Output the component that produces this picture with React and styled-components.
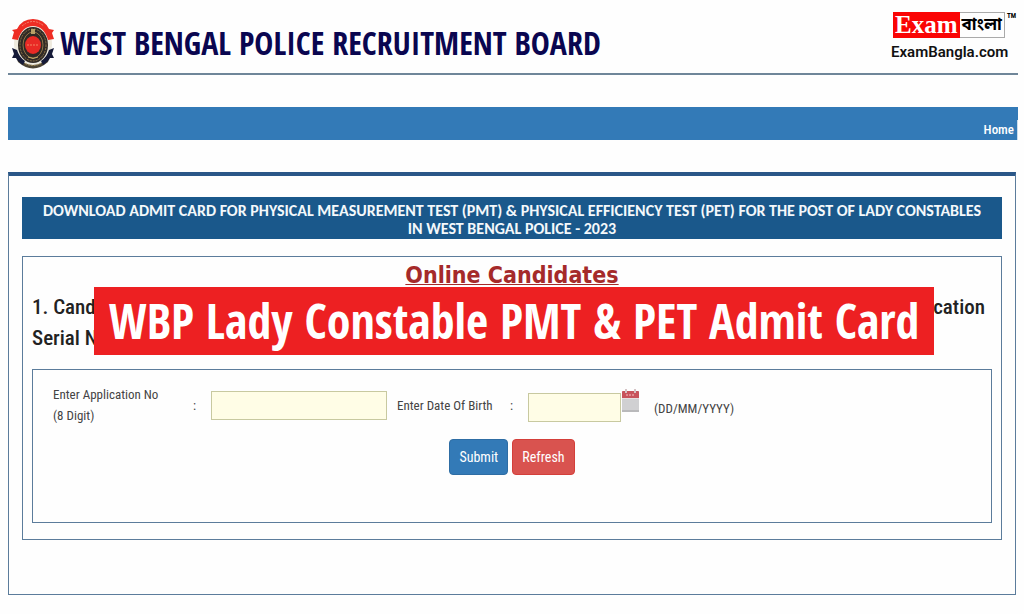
import React from "react";
import styled, { createGlobalStyle } from "styled-components";

const condensedBold = `"Open Sans Condensed", "Open Sans", sans-serif`;
const condensed = `"Roboto Condensed", Roboto, sans-serif`;
const line = "#5b7c9b";

const GlobalStyle = createGlobalStyle`
    * {
        box-sizing: border-box;
    }

    body {
        margin: 0;
        background-color: #fefefe;
        font-family: ${condensed};
        font-size: 13px;
        color: #444;
    }
`;

// Page header
const Page = styled.div`
    padding: 0 8px 16px;
`;

const Header = styled.header`
    display: flex;
    justify-content: space-between;
    height: 75px;
    margin-right: -2px;
    padding-top: 12px;
    border-bottom: 2px solid #6f8699;
`;

const Brand = styled.div`
    display: flex;
    align-items: center;
    gap: 3px;
    padding-left: 3px;
`;

const Emblem = styled.svg`
    width: 46px;
    height: 52px;
    flex: none;
`;

const Title = styled.h1`
    margin: 0;
    font-family: ${condensedBold};
    font-size: 32px;
    line-height: 44px;
    font-weight: 700;
    color: #0a0650;
    white-space: nowrap;
`;

const Partner = styled.div`
    display: flex;
    flex-direction: column;
    padding-right: 2px;
`;

const PartnerLogo = styled.div`
    display: flex;
    align-items: flex-start;
    padding-left: 2px;
`;

const LogoExam = styled.span`
    height: 26px;
    padding: 0 2px;
    background-color: #fa0505;
    color: white;
    font-family: "Liberation Serif", serif;
    font-size: 25px;
    line-height: 26px;
    font-weight: 700;
`;

const LogoBangla = styled.span`
    height: 26px;
    padding: 0 2px;
    border: 1px solid #aaa;
    border-left: none;
    color: black;
    font-family: "Noto Sans Bengali", sans-serif;
    font-size: 17px;
    line-height: 25px;
    font-weight: 700;
`;

const TradeMark = styled.span`
    padding-left: 2px;
    color: black;
    font-size: 7px;
    line-height: 8px;
    font-weight: 700;
`;

const PartnerSite = styled.a`
    color: #111;
    font-family: Roboto, sans-serif;
    font-size: 15px;
    line-height: 28px;
    font-weight: 600;
    text-decoration: none;
`;

const Nav = styled.nav`
    display: flex;
    justify-content: flex-end;
    align-items: flex-end;
    height: 33px;
    margin: 32px -2px 32px 0;
    background-color: #337ab7;
`;

const NavLink = styled.a`
    padding: 0 3px;
    border-right: 1px solid #c9dcec;
    color: white;
    font-size: 13px;
    line-height: 20px;
    font-weight: 500;
    text-decoration: none;
`;

// Content panels
const Panel = styled.main`
    padding: 21px 13px 54px;
    border: 1px solid ${line};
    border-top: 4px solid #2a5788;
`;

const Notice = styled.h2`
    margin: 0 0 17px;
    padding: 5px 8px 1px;
    background-color: #1a588b;
    color: #f4f8fb;
    font-family: Carlito, Lato, sans-serif;
    font-size: 16px;
    line-height: 18px;
    font-weight: 700;
    text-align: center;
`;

const Candidates = styled.section`
    position: relative;
    padding: 4px 9px 16px;
    border: 1px solid ${line};
`;

const SectionTitle = styled.h3`
    margin: 0;
    color: #a52a2a;
    font-family: "DejaVu Sans Condensed", "DejaVu Sans", sans-serif;
    font-size: 23px;
    line-height: 28px;
    font-weight: 700;
    text-align: center;
    text-decoration: underline;
    text-decoration-thickness: 1px;
`;

const Instructions = styled.div`
    padding: 3px 7px 15px 0;
    color: #222;
    font-size: 21px;
    line-height: 31px;
    font-weight: 500;
`;

const InstructionLine = styled.div`
    display: flex;
    justify-content: space-between;
`;

const Ribbon = styled.div`
    position: absolute;
    top: 30px;
    left: 71px;
    right: 67px;
    background-color: #ed2022;
    color: white;
    font-family: ${condensedBold};
    font-size: 48px;
    line-height: 68px;
    font-weight: 700;
    text-align: center;
    white-space: nowrap;
`;

// Search form
const Form = styled.form`
    min-height: 154px;
    padding: 14px 20px;
    border: 1px solid ${line};
`;

const Fields = styled.div`
    display: flex;
    align-items: center;
`;

const Label = styled.label`
    width: ${(props) => props.$width};
    font-size: 13px;
    line-height: 21px;
`;

const Colon = styled.span`
    width: 18px;
`;

const Input = styled.input`
    width: ${(props) => props.$width};
    height: 29px;
    padding: 2px 6px;
    border: 1px solid #c8c9a0;
    border-radius: 0;
    background-color: #fffde6;
    font: inherit;
`;

const AppNumber = styled.div`
    display: flex;
    align-items: center;
    margin-right: 10px;
`;

const BirthDate = styled.div`
    display: flex;
    align-items: center;
`;

const DatePicker = styled.div`
    display: flex;
    align-items: flex-end;
`;

const CalendarButton = styled.button`
    display: flex;
    padding: 0 0 9px;
    border: none;
    background: none;
    cursor: pointer;
`;

const Hint = styled.span`
    padding-left: 14px;
    font-size: 13px;
    line-height: 27px;
`;

const Actions = styled.div`
    display: flex;
    justify-content: center;
    gap: 4px;
    margin-top: 13px;
`;

const Button = styled.button`
    height: 36px;
    padding: 0 9px;
    border: 1px solid #2e6da4;
    border-radius: 4px;
    background-color: #337ab7;
    color: white;
    font-family: ${condensed};
    font-size: 14px;
    cursor: pointer;

    &:hover {
        opacity: 0.9;
    }
`;

const RefreshButton = styled(Button)`
    border-color: #d43f3a;
    background-color: #d9534f;
`;

const PoliceEmblem = () => (
    <Emblem viewBox="0 0 46 52" aria-hidden="true">
        <ellipse cx="22" cy="27" rx="19" ry="23" fill="#eeeade" />
        <path d="M5 39 Q22 57 39 39 L37 45 Q22 58 7 45 Z" fill="#4c4434" />
        <path d="M9 43 Q22 54 35 43" fill="none" stroke="#b39a61" strokeWidth="1" strokeDasharray="2 1" />
        <path d="M1 31 L6 33 Q8 40 14 44 L12 48 Q6 44 5 41 L1 41 L3 37 Z" fill="#151a38" />
        <path d="M43 31 L38 33 Q36 40 30 44 L32 48 Q38 44 39 41 L43 41 L41 37 Z" fill="#151a38" />
        <path d="M1 22 L3 15 L1 13 L6 12 Q11 2 22 2 Q33 2 38 12 L43 13 L41 16 L43 22 L37 23 Q33 9 22 9 Q11 9 7 23 Z" fill="#ee2d24" />
        <path d="M11 9 Q22 0 33 9" fill="none" stroke="#f5806c" strokeWidth="1" strokeDasharray="2 1" />
        <ellipse cx="22" cy="28" rx="15" ry="18" fill="#302a26" />
        <ellipse cx="22" cy="28" rx="13" ry="16" fill="none" stroke="#8d7447" strokeWidth="1" strokeDasharray="2 1" />
        <ellipse cx="22" cy="28" rx="10" ry="13" fill="none" stroke="#8d7447" strokeWidth="1" />
        <ellipse cx="22" cy="28" rx="8" ry="9" fill="#e92a25" />
        <path d="M20 12 h4 v5 h-4 z" fill="#b8a066" />
        <path d="M16 28 h12" stroke="#f38562" strokeWidth="1" strokeDasharray="2 1" />
        <path d="M17 40 Q22 43 27 40" fill="none" stroke="#c6aa6a" strokeWidth="1" />
    </Emblem>
);

const CalendarIcon = () => (
    <svg width="19" height="24" viewBox="0 0 19 24" aria-hidden="true">
        <rect x="1" y="2" width="17" height="21" rx="1" fill="#d0d0d2" />
        <rect x="1" y="21" width="17" height="2" fill="#b9b9bb" />
        <path d="M1 9 V3 Q1 2 2 2 H17 Q18 2 18 3 V9 Z" fill="#c8545c" />
        <path d="M5 6 H14" stroke="#e08a90" strokeWidth="2" strokeDasharray="2 1" />
        <path d="M5 0 V4 M14 0 V4" stroke="#d5c3c5" strokeWidth="2" />
        <path d="M1 9.5 H18" stroke="#e6dfe0" />
    </svg>
);

const App = () => {
    return (
        <>
            <GlobalStyle />
            <Page>
                <Header>
                    <Brand>
                        <PoliceEmblem />
                        <Title>WEST BENGAL POLICE RECRUITMENT BOARD</Title>
                    </Brand>
                    <Partner>
                        <PartnerLogo>
                            <LogoExam>Exam</LogoExam>
                            <LogoBangla lang="bn">বাংলা</LogoBangla>
                            <TradeMark>TM</TradeMark>
                        </PartnerLogo>
                        <PartnerSite href="#site">ExamBangla.com</PartnerSite>
                    </Partner>
                </Header>

                <Nav>
                    <NavLink href="#home">Home</NavLink>
                </Nav>

                <Panel>
                    <Notice>
                        DOWNLOAD ADMIT CARD FOR PHYSICAL MEASUREMENT TEST (PMT) &amp; PHYSICAL EFFICIENCY TEST (PET) FOR THE POST OF LADY CONSTABLES
                        <br />
                        IN WEST BENGAL POLICE - 2023
                    </Notice>

                    <Candidates>
                        <SectionTitle>Online Candidates</SectionTitle>
                        <Instructions>
                            <InstructionLine>
                                <span>1. Cand</span>
                                <span>cation</span>
                            </InstructionLine>
                            <InstructionLine>
                                <span>Serial N</span>
                            </InstructionLine>
                        </Instructions>
                        <Ribbon>WBP Lady Constable PMT &amp; PET Admit Card</Ribbon>

                        <Form onSubmit={(e) => e.preventDefault()}>
                            <Fields>
                                <AppNumber>
                                    <Label htmlFor="application-no" $width="140px">
                                        Enter Application No
                                        <br />
                                        (8 Digit)
                                    </Label>
                                    <Colon>:</Colon>
                                    <Input id="application-no" maxLength={8} $width="176px" />
                                </AppNumber>
                                <BirthDate>
                                    <Label htmlFor="birth-date" $width="113px">
                                        Enter Date Of Birth
                                    </Label>
                                    <Colon>:</Colon>
                                    <DatePicker>
                                        <Input id="birth-date" $width="93px" />
                                        <CalendarButton type="button" aria-label="Pick a date">
                                            <CalendarIcon />
                                        </CalendarButton>
                                        <Hint>(DD/MM/YYYY)</Hint>
                                    </DatePicker>
                                </BirthDate>
                            </Fields>
                            <Actions>
                                <Button type="submit">Submit</Button>
                                <RefreshButton type="reset">Refresh</RefreshButton>
                            </Actions>
                        </Form>
                    </Candidates>
                </Panel>
            </Page>
        </>
    );
};

export default App;
